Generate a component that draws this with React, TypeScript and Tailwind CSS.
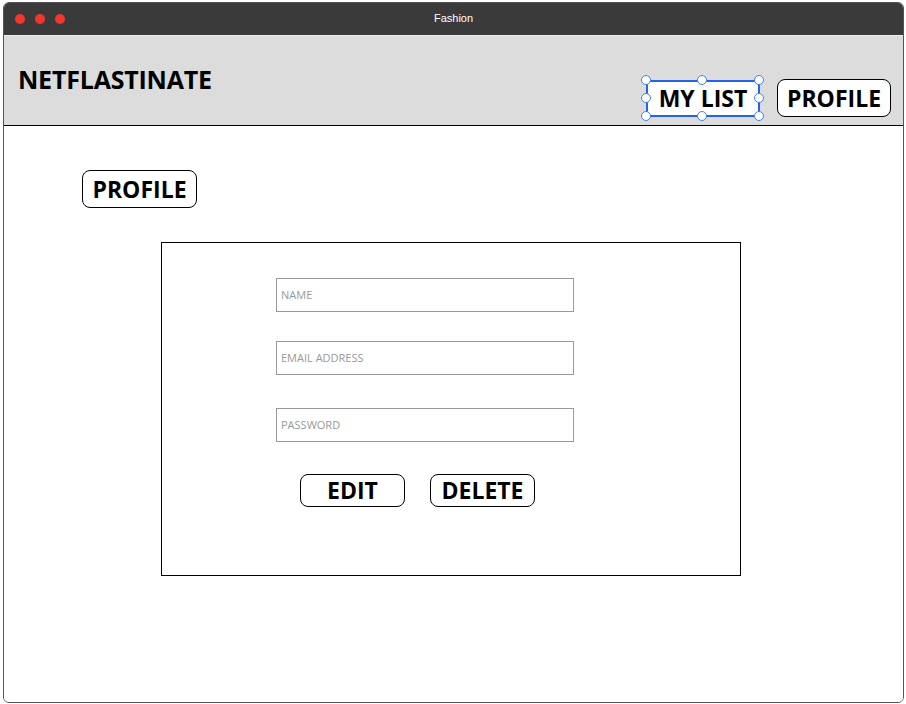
import React from "react";

const font = { fontFamily: '"Source Sans Pro", "Open Sans", "Noto Sans", sans-serif' };

export default function App() {
  const hx = [-5, 51, 108];
  const hy = [-5, 13, 31];
  return (
    <div className="w-[906px] h-[704px] bg-white pt-[2px] pl-[3px]" style={font}>
      <div className="w-[901px] h-[701px] rounded-[6px] border border-[#555] overflow-hidden flex flex-col">
        <div className="h-[32px] bg-[#3a3a3a] flex items-center relative shrink-0">
          <div className="flex gap-[10px] pl-[11px]">
            <span className="w-[10px] h-[10px] rounded-full bg-[#f2382c]" />
            <span className="w-[10px] h-[10px] rounded-full bg-[#f2382c]" />
            <span className="w-[10px] h-[10px] rounded-full bg-[#f2382c]" />
          </div>
          <div className="absolute inset-0 flex items-center justify-center text-white text-[11px] pb-[2px]" style={{ fontFamily: '"Liberation Sans", Arial, sans-serif' }}>
            Fashion
          </div>
        </div>
        <div className="h-[91px] bg-[#dcdcdc] border-b border-black flex justify-between shrink-0 border-t border-t-[#eee]">
          <div className="pl-[14px] pt-[28px] text-[25px] font-bold tracking-[-0.2px] text-black leading-[30px]">NETFLASTINATE</div>
          <div className="flex items-start pt-[44px] pr-[12px] gap-[17px]">
            <div className="relative w-[114px] h-[37px]">
              <div className="w-full h-full bg-white border-2 border-[#2563eb] rounded-[3px] flex items-center justify-center text-[23px] font-bold leading-none">MY LIST</div>
              {hy.map((y) =>
                hx.map((x) =>
                  x === 51 && y === 13 ? null : (
                    <span
                      key={`${x}-${y}`}
                      className="absolute w-[10px] h-[10px] rounded-full bg-white border border-[#3b82f6]"
                      style={{ left: x, top: y }}
                    />
                  )
                )
              )}
            </div>
            <div className="w-[114px] h-[38px] bg-white border border-black rounded-[8px] flex items-center justify-center text-[23px] font-bold leading-none -mt-[1px]">PROFILE</div>
          </div>
        </div>
        <div className="flex-1 bg-white">
          <div className="ml-[78px] mt-[44px] w-[115px] h-[38px] border border-black rounded-[8px] flex items-center justify-center text-[23px] font-bold leading-none">PROFILE</div>
          <div className="ml-[157px] mt-[34px] w-[580px] h-[334px] border border-black">
            <div className="ml-[114px] mt-[35px] flex flex-col">
              <div className="w-[298px] h-[34px] border border-[#999] flex items-center pl-[4px] text-[11px] text-[#999]">NAME</div>
              <div className="w-[298px] h-[34px] border border-[#999] flex items-center pl-[4px] text-[11px] text-[#999] mt-[29px]">EMAIL ADDRESS</div>
              <div className="w-[298px] h-[34px] border border-[#999] flex items-center pl-[4px] text-[11px] text-[#999] mt-[33px]">PASSWORD</div>
            </div>
            <div className="ml-[138px] mt-[32px] flex gap-[25px]">
              <div className="w-[105px] h-[33px] border border-black rounded-[8px] flex items-center justify-center text-[23px] font-bold leading-none">EDIT</div>
              <div className="w-[105px] h-[33px] border border-black rounded-[8px] flex items-center justify-center text-[23px] font-bold leading-none">DELETE</div>
            </div>
          </div>
        </div>
      </div>
    </div>
  );
}
